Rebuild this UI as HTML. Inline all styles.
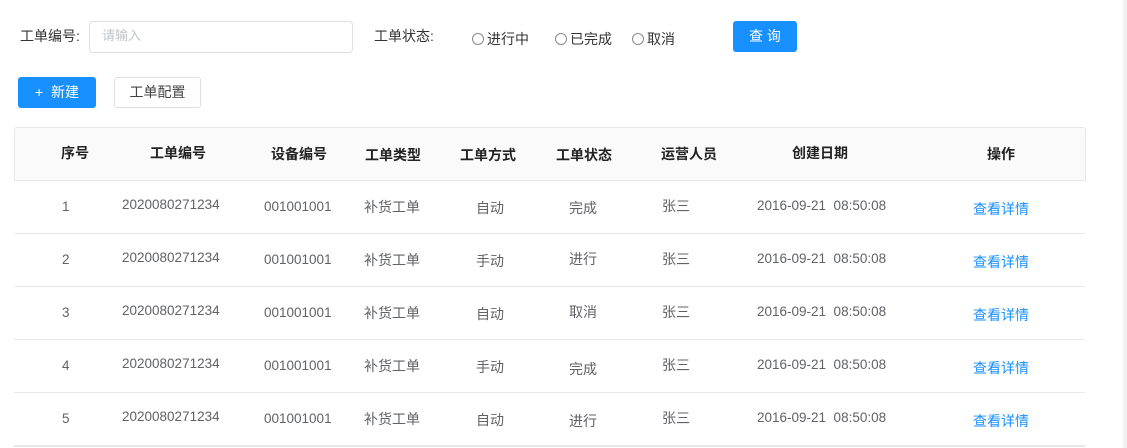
<!DOCTYPE html>
<html><head><meta charset="utf-8"><style>
body{margin:0;width:1127px;height:448px;background:#fff;position:relative;overflow:hidden;font-family:"Liberation Sans","Noto Sans CJK SC",sans-serif;color:#606266;font-size:14px}
.a{position:absolute;white-space:nowrap;line-height:16px}
.n{font-size:13.5px}
.rad{position:absolute;width:10px;height:10px;border:1px solid #888;border-radius:50%}
.h{font-weight:bold;color:#222;font-size:14px}
.ln{position:absolute;left:14px;width:1071px;height:1px;background:#e8e8e8}
.op{color:#1890ff}
</style></head><body>
<div style="position:absolute;right:0;top:0;width:4px;height:448px;background:#f3f3f3"></div>
<div class="a" style="left:20px;top:28px;color:#333">工单编号:</div>
<div style="position:absolute;left:89px;top:21px;width:262px;height:30px;border:1px solid #dcdfe6;border-radius:4px"></div>
<div class="a" style="left:102px;top:28px;color:#c0c4cc;font-size:13px">请输入</div>
<div class="a" style="left:374px;top:28px;color:#333">工单状态:</div>
<div class="rad" style="left:472px;top:33px"></div><div class="a" style="left:487px;top:31px;color:#333">进行中</div>
<div class="rad" style="left:555px;top:33px"></div><div class="a" style="left:570px;top:31px;color:#333">已完成</div>
<div class="rad" style="left:632px;top:33px"></div><div class="a" style="left:647px;top:31px;color:#333">取消</div>
<div style="position:absolute;left:733px;top:21px;width:64px;height:31px;background:#1890ff;border-radius:3px;color:#fff;font-size:14px;line-height:31px;text-align:center">查 询</div>
<div style="position:absolute;left:18px;top:77px;width:78px;height:31px;background:#1890ff;border-radius:3px;color:#fff;font-size:14px;line-height:31px;text-align:center">+&nbsp; 新建</div>
<div style="position:absolute;left:114px;top:77px;width:85px;height:29px;border:1px solid #dcdfe6;border-radius:3px;color:#444;font-size:14px;line-height:29px;text-align:center">工单配置</div>
<div style="position:absolute;left:14px;top:127px;width:1070px;height:53px;background:#fafafa;border:1px solid #e8e8e8;border-bottom:none;border-radius:3px 3px 0 0"></div>
<div class="a h" style="left:61px;top:145px">序号</div>
<div class="a h" style="left:150px;top:145px">工单编号</div>
<div class="a h" style="left:271px;top:146px">设备编号</div>
<div class="a h" style="left:365px;top:147px">工单类型</div>
<div class="a h" style="left:460px;top:147px">工单方式</div>
<div class="a h" style="left:556px;top:147px">工单状态</div>
<div class="a h" style="left:661px;top:146px">运营人员</div>
<div class="a h" style="left:792px;top:145px">创建日期</div>
<div class="a h" style="left:987px;top:146px">操作</div>
<div class="ln" style="top:180px"></div>
<div class="ln" style="top:233px"></div>
<div class="ln" style="top:286px"></div>
<div class="ln" style="top:339px"></div>
<div class="ln" style="top:392px"></div>
<div class="ln" style="top:445px;height:2px"></div>

<div class="a n" style="left:62px;top:199px">1</div><div class="a n" style="left:122px;top:197px">2020080271234</div><div class="a n" style="left:264px;top:199px">001001001</div><div class="a" style="left:364px;top:199px">补货工单</div><div class="a" style="left:476px;top:200px">自动</div><div class="a" style="left:569px;top:200px">完成</div><div class="a" style="left:662px;top:198px">张三</div><div class="a n" style="left:757px;top:198px">2016-09-21&nbsp; 08:50:08</div><div class="a op" style="left:973px;top:201px">查看详情</div>

<div class="a n" style="left:62px;top:252px">2</div><div class="a n" style="left:122px;top:250px">2020080271234</div><div class="a n" style="left:264px;top:252px">001001001</div><div class="a" style="left:364px;top:252px">补货工单</div><div class="a" style="left:476px;top:253px">手动</div><div class="a" style="left:569px;top:251px">进行</div><div class="a" style="left:662px;top:251px">张三</div><div class="a n" style="left:757px;top:251px">2016-09-21&nbsp; 08:50:08</div><div class="a op" style="left:973px;top:254px">查看详情</div>

<div class="a n" style="left:62px;top:305px">3</div><div class="a n" style="left:122px;top:303px">2020080271234</div><div class="a n" style="left:264px;top:305px">001001001</div><div class="a" style="left:364px;top:305px">补货工单</div><div class="a" style="left:476px;top:306px">自动</div><div class="a" style="left:569px;top:304px">取消</div><div class="a" style="left:662px;top:304px">张三</div><div class="a n" style="left:757px;top:304px">2016-09-21&nbsp; 08:50:08</div><div class="a op" style="left:973px;top:307px">查看详情</div>

<div class="a n" style="left:62px;top:358px">4</div><div class="a n" style="left:122px;top:356px">2020080271234</div><div class="a n" style="left:264px;top:358px">001001001</div><div class="a" style="left:364px;top:358px">补货工单</div><div class="a" style="left:476px;top:359px">手动</div><div class="a" style="left:569px;top:361px">完成</div><div class="a" style="left:662px;top:357px">张三</div><div class="a n" style="left:757px;top:357px">2016-09-21&nbsp; 08:50:08</div><div class="a op" style="left:973px;top:360px">查看详情</div>

<div class="a n" style="left:62px;top:411px">5</div><div class="a n" style="left:122px;top:409px">2020080271234</div><div class="a n" style="left:264px;top:411px">001001001</div><div class="a" style="left:364px;top:411px">补货工单</div><div class="a" style="left:476px;top:412px">自动</div><div class="a" style="left:569px;top:413px">进行</div><div class="a" style="left:662px;top:410px">张三</div><div class="a n" style="left:757px;top:410px">2016-09-21&nbsp; 08:50:08</div><div class="a op" style="left:973px;top:413px">查看详情</div>
</body></html>
